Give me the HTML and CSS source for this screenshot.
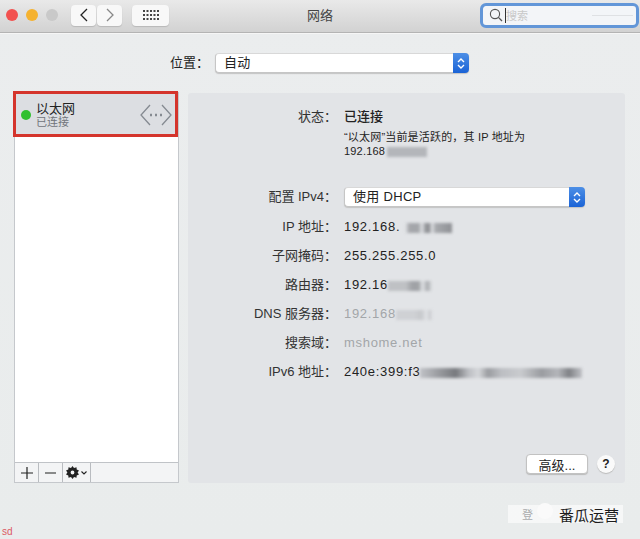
FILE: index.html
```html
<!DOCTYPE html>
<html>

<head>
    <title>网络</title>
    <link rel="stylesheet" href="styles.css">
</head>

<body>
    <header class="titlebar">
        <div class="lights">
            <span class="light red"></span>
            <span class="light yellow"></span>
            <span class="light grey"></span>
        </div>
        <div class="nav-group">
            <button class="tool-btn nav-btn">
                <svg width="10" height="16" viewBox="0 0 10 16"><path d="M8 2 L2 8 L8 14" fill="none" stroke="#222" stroke-width="1.3"/></svg>
            </button>
            <button class="tool-btn nav-btn">
                <svg width="10" height="16" viewBox="0 0 10 16"><path d="M2 2 L8 8 L2 14" fill="none" stroke="#888" stroke-width="1.3"/></svg>
            </button>
        </div>
        <button class="tool-btn grid-btn">
            <svg width="16" height="12" viewBox="0 0 16 12" fill="#444">
                <rect x="0" y="1" width="2" height="2"/><rect x="3.5" y="1" width="2" height="2"/><rect x="7" y="1" width="2" height="2"/><rect x="10.5" y="1" width="2" height="2"/><rect x="14" y="1" width="2" height="2"/>
                <rect x="0" y="5" width="2" height="2"/><rect x="3.5" y="5" width="2" height="2"/><rect x="7" y="5" width="2" height="2"/><rect x="10.5" y="5" width="2" height="2"/><rect x="14" y="5" width="2" height="2"/>
                <rect x="0" y="9" width="2" height="2"/><rect x="3.5" y="9" width="2" height="2"/><rect x="7" y="9" width="2" height="2"/><rect x="10.5" y="9" width="2" height="2"/><rect x="14" y="9" width="2" height="2"/>
            </svg>
        </button>
        <div class="window-title">网络</div>
        <div class="search">
            <svg width="14" height="14" viewBox="0 0 14 14"><circle cx="6" cy="6" r="4.6" fill="none" stroke="#555" stroke-width="1.1"/><path d="M9.4 9.4 L13 13" stroke="#555" stroke-width="1.3"/></svg>
            <span class="caret"></span>
            <span class="search-text">搜索</span>
            <span class="search-line"></span>
        </div>
    </header>

    <div class="location-row">
        <span class="location-label">位置：</span>
        <div class="select location-select">
            <span class="select-text">自动</span>
            <span class="stepper">
                <svg width="8" height="13" viewBox="0 0 8 13"><path d="M1 5 L4 2 L7 5 M1 8 L4 11 L7 8" fill="none" stroke="#fff" stroke-width="1.4"/></svg>
            </span>
        </div>
    </div>

    <main class="content">
        <aside class="sidebar">
            <div class="service-list">
                <div class="service">
                    <span class="status-dot"></span>
                    <div class="service-names">
                        <div class="service-name">以太网</div>
                        <div class="service-sub">已连接</div>
                    </div>
                    <svg class="service-icon" width="32" height="22" viewBox="0 0 32 22" fill="none" stroke="#858a91" stroke-width="1.3">
                        <path d="M10 1 L1 11 L10 21"/>
                        <path d="M22 1 L31 11 L22 21"/>
                        <path d="M10 11 H12 M15 11 H17 M20 11 H22" stroke-width="2.4"/>
                    </svg>
                </div>
            </div>
            <div class="list-tools">
                <span class="list-tool">
                    <svg width="12" height="12" viewBox="0 0 12 12"><path d="M6 0 V12 M0 6 H12" stroke="#222" stroke-width="1.2"/></svg>
                </span>
                <span class="list-tool">
                    <svg width="12" height="12" viewBox="0 0 12 12"><path d="M0 6 H11" stroke="#444" stroke-width="1.2"/></svg>
                </span>
                <span class="list-tool gear-tool">
                    <svg width="13" height="13" viewBox="0 0 13 13">
                        <path d="M6.5 0 L8 2 L10.5 1.3 L10.7 3.6 L13 4.5 L11.6 6.5 L13 8.5 L10.7 9.4 L10.5 11.7 L8 11 L6.5 13 L5 11 L2.5 11.7 L2.3 9.4 L0 8.5 L1.4 6.5 L0 4.5 L2.3 3.6 L2.5 1.3 L5 2 Z M6.5 4.6 A1.9 1.9 0 1 0 6.5 8.4 A1.9 1.9 0 1 0 6.5 4.6 Z" fill="#222" fill-rule="evenodd"/>
                    </svg>
                    <svg width="6" height="4" viewBox="0 0 6 4"><path d="M0.5 0.5 L3 3 L5.5 0.5" fill="none" stroke="#222" stroke-width="1.1"/></svg>
                </span>
            </div>
        </aside>

        <section class="panel">
            <div class="status-block">
                <span class="label">状态：</span>
                <div class="status-info">
                    <div class="status-value">已连接</div>
                    <div class="status-desc">
                        <div class="desc-line">“以太网”当前是活跃的，其 IP 地址为</div>
                        <div class="desc-line">192.168<span class="smudge smudge-status"></span></div>
                    </div>
                </div>
            </div>
            <div class="form">
                <span class="label">配置 IPv4：</span>
                <div class="select ipv4-select">
                    <span class="select-text">使用 DHCP</span>
                    <span class="stepper">
                        <svg width="8" height="13" viewBox="0 0 8 13"><path d="M1 5 L4 2 L7 5 M1 8 L4 11 L7 8" fill="none" stroke="#fff" stroke-width="1.4"/></svg>
                    </span>
                </div>
                <span class="label">IP 地址：</span>
                <span class="value">192.168.<span class="smudge smudge-ip"></span></span>
                <span class="label">子网掩码：</span>
                <span class="value">255.255.255.0</span>
                <span class="label">路由器：</span>
                <span class="value">192.16<span class="smudge smudge-router"></span></span>
                <span class="label">DNS 服务器：</span>
                <span class="value dim">192.168<span class="smudge smudge-dns"></span></span>
                <span class="label">搜索域：</span>
                <span class="value dim">mshome.net</span>
                <span class="label">IPv6 地址：</span>
                <span class="value">240e:399:f3<span class="smudge smudge-v6"></span></span>
            </div>
            <div class="panel-actions">
                <button class="advanced-btn">高级...</button>
                <span class="help-btn">?</span>
            </div>
        </section>
    </main>

    <div class="highlight"></div>
    <div class="watermark">
        <span class="wm-ghost">登</span>
        <span class="wm-bubble"></span>
        <span class="wm-text">番瓜运营</span>
    </div>
    <div class="corner-note">sd</div>
</body>

</html>
```

FILE: styles.css
```css
/* page */
html,
body {
  margin: 0;
  padding: 0;
}

body {
  position: relative;
  width: 640px;
  height: 539px;
  overflow: hidden;
  display: flex;
  flex-direction: column;
  font-family: "Liberation Sans", "Noto Sans CJK SC", sans-serif;
  font-size: 13px;
  color: #222;
  background: linear-gradient(#ebedee, #e9ecec);
}

/* title bar */
.titlebar {
  height: 33px;
  flex: none;
  display: flex;
  align-items: center;
  box-sizing: border-box;
  padding-bottom: 2px;
  background: linear-gradient(#e9e9e9, #d2d2d2);
  border-bottom: 1px solid #b4b4b4;
  box-shadow: 0 1px 0 #f6f6f6;
}

.lights {
  display: flex;
  gap: 8px;
  margin-left: 6px;
}

.light {
  width: 12px;
  height: 12px;
  border-radius: 50%;
}

.red {
  background: #f2514f;
}

.yellow {
  background: #f5b22f;
}

.grey {
  background: #c9c9c9;
}

.tool-btn {
  height: 21px;
  padding: 0;
  border: 0;
  display: flex;
  align-items: center;
  justify-content: center;
  background: #f8f8f8;
  border-radius: 4px;
  box-shadow: 0 1px 1px #b8b8b8;
}

.nav-group {
  display: flex;
  gap: 1px;
  margin-left: 13px;
}

.nav-btn {
  width: 25px;
}

.grid-btn {
  width: 37px;
  margin-left: 10px;
}

.window-title {
  width: 60px;
  margin-left: 121px;
  line-height: 15px;
  text-align: center;
  color: #444;
}

.search {
  width: 159px;
  height: 25px;
  margin-left: 130px;
  display: flex;
  align-items: center;
  padding-left: 6px;
  padding-right: 3px;
  box-sizing: border-box;
  background: #f3f5f8;
  border: 3px solid #6296d8;
  border-radius: 6px;
}

.caret {
  width: 1px;
  height: 15px;
  margin-left: 2px;
  background: #333;
}

.search-text {
  font-size: 11px;
  color: #c8c8c8;
}

.search-line {
  flex: 1;
  height: 1px;
  margin-left: 64px;
  background: #dfe1e4;
}

/* location */
.location-row {
  height: 59px;
  flex: none;
  box-sizing: border-box;
  padding-top: 20px;
  padding-left: 170px;
  display: flex;
  align-items: flex-start;
}

.location-label {
  width: 45px;
  line-height: 20px;
}

.select {
  height: 20px;
  display: flex;
  justify-content: space-between;
  box-sizing: border-box;
  background: #fff;
  border: 1px solid #c6c6c6;
  border-top-color: #d8d8d8;
  border-right: 0;
  border-radius: 4px;
  box-shadow: 0 1px 1px #c4c4c4;
}

.location-select {
  width: 254px;
}

.ipv4-select {
  width: 241px;
}

.select-text {
  padding-left: 8px;
  line-height: 18px;
  letter-spacing: 0.3px;
}

.stepper {
  width: 16px;
  height: 20px;
  margin-top: -1px;
  display: flex;
  align-items: center;
  justify-content: center;
  background: linear-gradient(#4d8fe6, #1a63d6);
  border-radius: 0 4px 4px 0;
}

/* main area */
.content {
  display: flex;
  align-items: flex-start;
  padding-left: 14px;
  gap: 9px;
}

.sidebar {
  width: 165px;
  height: 391px;
  display: flex;
  flex-direction: column;
  box-sizing: border-box;
  border: 1px solid #c5c8cc;
  background: #fff;
}

.service-list {
  flex: 1;
}

.service {
  height: 44px;
  display: flex;
  align-items: center;
  background: #dcdee2;
}

.status-dot {
  width: 10px;
  height: 10px;
  margin-left: 6px;
  border-radius: 50%;
  background: #31c02f;
}

.service-names {
  margin-left: 5px;
  flex: 1;
}

.service-name {
  font-size: 13px;
  line-height: 15px;
}

.service-sub {
  font-size: 11px;
  line-height: 13px;
  color: #70747a;
}

.service-icon {
  margin-right: 6px;
}

.list-tools {
  height: 19px;
  display: flex;
  border-top: 1px solid #c0c3c7;
  background: #f3f4f5;
}

.list-tool {
  width: 23px;
  display: flex;
  align-items: center;
  justify-content: center;
  gap: 2px;
  border-right: 1px solid #b9bcc0;
}

.gear-tool {
  width: 27px;
}

/* right panel */
.panel {
  width: 437px;
  height: 390px;
  margin-top: 1px;
  display: flex;
  flex-direction: column;
  box-sizing: border-box;
  padding-top: 14px;
  background: #e2e4e7;
  border-radius: 3px;
}

.status-block,
.form {
  display: grid;
  grid-template-columns: 149px 1fr;
  column-gap: 7px;
}

.label {
  text-align: right;
  line-height: 19px;
  color: #333;
}

.status-value {
  font-weight: 500;
  font-size: 13px;
  line-height: 19px;
}

.status-desc {
  margin-top: 4px;
  font-size: 11px;
}

.desc-line {
  height: 14px;
  line-height: 14px;
  letter-spacing: 0.18px;
  white-space: nowrap;
}

.form {
  margin-top: 29px;
  row-gap: 10px;
}

.value {
  line-height: 19px;
  letter-spacing: 0.7px;
  white-space: nowrap;
}

.dim {
  color: #a3a6a9;
}

/* the blurred out parts of the addresses */
.smudge {
  display: inline-block;
  height: 10px;
  vertical-align: middle;
  filter: blur(1.5px);
}

.smudge-status {
  width: 40px;
  margin-left: 2px;
  background: #b4b6ba;
}

.smudge-ip {
  width: 52px;
  background: linear-gradient(90deg, transparent 10%, #a4a6aa 18%, #a4a6aa 36%, transparent 42%, #8f9195 50%, #8f9195 56%, transparent 62%, #a8aaae 68%, #8f9195 100%);
}

.smudge-router {
  width: 44px;
  background: linear-gradient(90deg, #bfc1c4 40%, #a0a2a6 55%, #a0a2a6 70%, transparent 78%, #a8aaae 90%, transparent 100%);
}

.smudge-dns {
  width: 36px;
  background: linear-gradient(90deg, #cfd1d4 50%, #c6c8cb 70%, transparent 85%, #c6c8cb 95%, transparent 100%);
}

.smudge-v6 {
  width: 162px;
  background: linear-gradient(90deg, #c0c2c6 0, #77797d 22%, #bcbec2 30%, #d5d7da 36%, #9a9ca0 42%, #bcbec2 50%, #c9cbce 62%, #9a9ca0 75%, #b4b6ba 85%, #7f8185 92%, #c0c2c6 100%);
}

.panel-actions {
  margin-top: auto;
  margin-bottom: 9px;
  display: flex;
  align-items: center;
  justify-content: flex-end;
  gap: 9px;
  padding-right: 10px;
}

.advanced-btn {
  width: 62px;
  height: 20px;
  padding: 0;
  border: 1px solid #c2c2c2;
  border-radius: 4px;
  background: #fff;
  font-family: inherit;
  font-size: 13px;
  color: #222;
  box-shadow: 0 1px 1px #bbb;
}

.help-btn {
  width: 18px;
  height: 18px;
  border-radius: 50%;
  background: #fafafa;
  box-shadow: 0 1px 1px #bbb;
  text-align: center;
  font-size: 12px;
  font-weight: bold;
  line-height: 18px;
}

/* overlays */
.highlight {
  position: absolute;
  left: 13px;
  top: 91px;
  width: 159px;
  height: 40px;
  border: 3px solid #d4342c;
}

.watermark {
  position: absolute;
  left: 508px;
  top: 505px;
  width: 115px;
  height: 18px;
  display: flex;
  align-items: center;
  background: rgba(255, 255, 255, 0.6);
}

.wm-ghost {
  margin-left: 14px;
  font-size: 11px;
  color: #a9abad;
}

.wm-bubble {
  width: 16px;
  height: 16px;
  margin-left: 4px;
  margin-top: -6px;
  border-radius: 50%;
  background: #fafafa;
}

.wm-text {
  margin-left: 6px;
  font-size: 15px;
  color: #1c1c1c;
  white-space: nowrap;
}

.corner-note {
  position: absolute;
  left: 2px;
  top: 526px;
  font-size: 10px;
  color: #dc5a64;
}
```
